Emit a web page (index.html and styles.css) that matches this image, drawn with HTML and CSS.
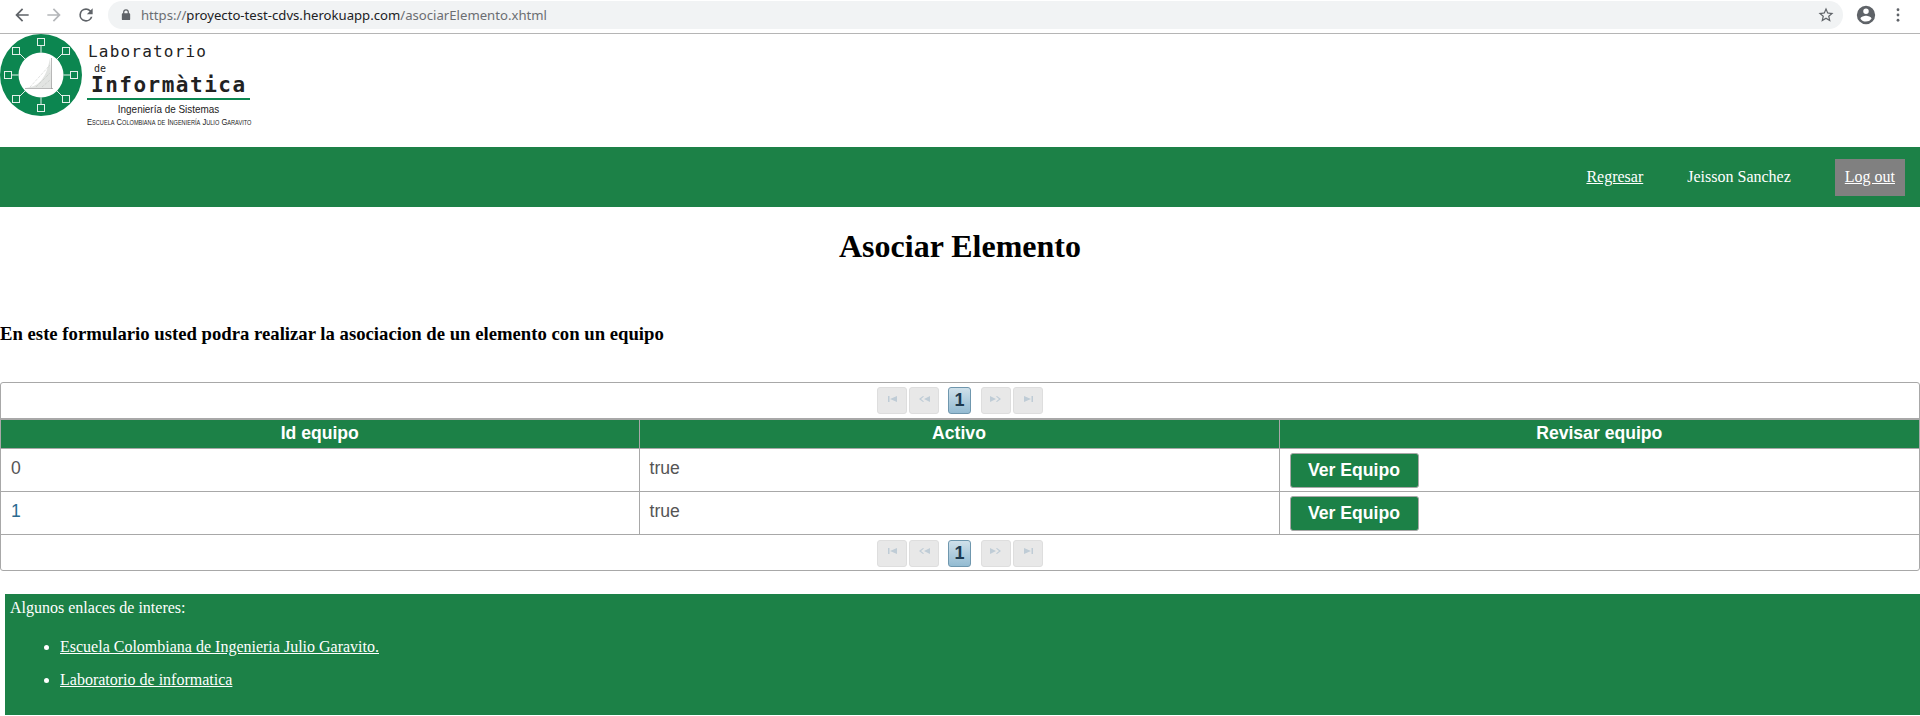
FILE: index.html
```html
<!DOCTYPE html>
<html lang="es">
<head>
<meta charset="utf-8">
<title>Asociar Elemento</title>
<link rel="stylesheet" href="styles.css">
</head>
<body>
<div class="browser-bar">
  <div class="nav-icons">
    <svg class="ico" viewBox="0 0 24 24"><path fill="#5f6368" d="M20 11H7.83l5.59-5.59L12 4l-8 8 8 8 1.41-1.41L7.83 13H20z"/></svg>
    <svg class="ico" viewBox="0 0 24 24"><path fill="#b4b6b9" d="M4 11h12.17l-5.59-5.59L12 4l8 8-8 8-1.41-1.41L16.17 13H4z"/></svg>
    <svg class="ico" viewBox="0 0 24 24"><path fill="#5f6368" d="M17.65 6.35A7.96 7.96 0 0 0 12 4a8 8 0 1 0 7.73 10h-2.08A6 6 0 1 1 12 6c1.66 0 3.14.69 4.22 1.78L13 11h7V4z"/></svg>
  </div>
  <div class="address">
    <svg class="lock" viewBox="0 0 12 14"><path fill="#5f6368" d="M10 5H9.5V3.5a3.5 3.5 0 0 0-7 0V5H2a1 1 0 0 0-1 1v6a1 1 0 0 0 1 1h8a1 1 0 0 0 1-1V6a1 1 0 0 0-1-1zM4 3.5a2 2 0 0 1 4 0V5H4z"/></svg>
    <span class="url"><span class="url-dim">https://</span>proyecto-test-cdvs.herokuapp.com<span class="url-dim">/asociarElemento.xhtml</span></span>
    <svg class="star" viewBox="0 0 24 24"><path fill="#5f6368" d="M22 9.24l-7.19-.62L12 2 9.19 8.63 2 9.24l5.46 4.73L5.82 21 12 17.27 18.18 21l-1.63-7.03L22 9.24zM12 15.4l-3.76 2.27 1-4.28-3.32-2.88 4.38-.38L12 6.1l1.71 4.04 4.38.38-3.32 2.88 1 4.28L12 15.4z"/></svg>
  </div>
  <svg class="account" viewBox="0 0 24 24"><path fill="#5f6368" d="M12 2a10 10 0 1 0 0 20 10 10 0 0 0 0-20zm0 3a3 3 0 1 1 0 6 3 3 0 0 1 0-6zm0 14.2a7.2 7.2 0 0 1-6-3.22c.03-1.99 4-3.08 6-3.08s5.97 1.09 6 3.08a7.2 7.2 0 0 1-6 3.22z"/></svg>
  <svg class="kebab" viewBox="0 0 4 16"><circle cx="2" cy="2" r="1.6" fill="#5f6368"/><circle cx="2" cy="8" r="1.6" fill="#5f6368"/><circle cx="2" cy="14" r="1.6" fill="#5f6368"/></svg>
</div>

<header class="brand">
  <svg class="logo-mark" viewBox="0 0 82 82">
    <circle cx="41" cy="41" r="41" fill="#0c8650"/>
    <circle cx="41" cy="41" r="22.500" fill="#fff"/>
    <g stroke="#e4f0ea" stroke-width="1" fill="none">
      <path d="M41 18.500V12M41 63.500V70M18.500 41H12M63.500 41H70M25 25l-5-5M57 25l5-5M25 57l-5 5M57 57l5 5"/>
      <rect x="37.500" y="4.500" width="7" height="7"/>
      <rect x="37.500" y="70.500" width="7" height="7"/>
      <rect x="4.500" y="37.500" width="7" height="7"/>
      <rect x="70.500" y="37.500" width="7" height="7"/>
      <rect x="12.500" y="13.500" width="7" height="7"/>
      <rect x="62.500" y="13.500" width="7" height="7"/>
      <rect x="12.500" y="61.500" width="7" height="7"/>
      <rect x="62.500" y="61.500" width="7" height="7"/>
    </g>
    <path d="M25 54c12-1 21-7 25-30l2 30z" fill="#e2e4e2"/>
    <path d="M30 53l20-22M36 53l14-14M42 53l8-7" stroke="#b5b8b5" stroke-width=".6" stroke-dasharray="1 1" fill="none"/>
    <path d="M25 54.500h28M51.500 24v31" stroke="#9a9a9a" stroke-width=".7" fill="none"/>
  </svg>
  <div class="logo-text">
    <div class="logo-l1">Laboratorio</div>
    <div class="logo-l2">de</div>
    <div class="logo-l3">Informàtica</div>
    <div class="logo-l4">Ingeniería de Sistemas</div>
    <div class="logo-l5">Escuela Colombiana de Ingeniería Julio Garavito</div>
  </div>
</header>

<nav class="topnav">
  <a class="navlink" href="#">Regresar</a>
  <span class="navlink">Jeisson Sanchez</span>
  <a class="logout" href="#">Log out</a>
</nav>

<main>
  <h1 class="title">Asociar Elemento</h1>
  <h3 class="intro">En este formulario usted podra realizar la asociacion de un elemento con un equipo</h3>

  <section class="datatable">
    <div class="pager pager-top">
      <span class="pbtn"><svg class="i9" viewBox="0 0 9 6"><path d="M0 0h1.500v6H0zM9 0v6L2 3z"/></svg></span>
      <span class="pbtn"><svg class="i12" viewBox="0 0 12 6"><path d="M12 0v6L6 3zM5 0l1 .6L3 3l3 2.400L5 6 1 3z"/></svg></span>
      <span class="pnum">1</span>
      <span class="pbtn"><svg class="i12" viewBox="0 0 12 6"><path d="M0 0l6 3-6 3zM7 0l4 3-4 3-1-.6L9 3 6 .6z"/></svg></span>
      <span class="pbtn"><svg class="i9" viewBox="0 0 9 6"><path d="M0 0l7 3-7 3zM7.500 0H9v6H7.500z"/></svg></span>
    </div>
    <table>
      <thead>
        <tr><th class="col-id">Id equipo</th><th class="col-activo">Activo</th><th>Revisar equipo</th></tr>
      </thead>
      <tbody>
        <tr><td>0</td><td>true</td><td><button class="ver">Ver Equipo</button></td></tr>
        <tr><td class="blue">1</td><td>true</td><td><button class="ver">Ver Equipo</button></td></tr>
      </tbody>
    </table>
    <div class="pager pager-bottom">
      <span class="pbtn"><svg class="i9" viewBox="0 0 9 6"><path d="M0 0h1.500v6H0zM9 0v6L2 3z"/></svg></span>
      <span class="pbtn"><svg class="i12" viewBox="0 0 12 6"><path d="M12 0v6L6 3zM5 0l1 .6L3 3l3 2.400L5 6 1 3z"/></svg></span>
      <span class="pnum">1</span>
      <span class="pbtn"><svg class="i12" viewBox="0 0 12 6"><path d="M0 0l6 3-6 3zM7 0l4 3-4 3-1-.6L9 3 6 .6z"/></svg></span>
      <span class="pbtn"><svg class="i9" viewBox="0 0 9 6"><path d="M0 0l7 3-7 3zM7.500 0H9v6H7.500z"/></svg></span>
    </div>
  </section>
</main>

<footer class="foot">
  <div>Algunos enlaces de interes:</div>
  <ul>
    <li><a href="#">Escuela Colombiana de Ingenieria Julio Garavito.</a></li>
    <li><a href="#">Laboratorio de informatica</a></li>
  </ul>
</footer>
</body>
</html>
```

FILE: styles.css
```css
* { box-sizing: border-box; }
html, body { margin: 0; padding: 0; background: #fff; }
body { height: 716px; overflow: hidden; font-family: "Liberation Serif", serif; font-size: 16px; color: #000; }

.browser-bar { height: 34px; display: flex; align-items: flex-start; border-bottom: 1px solid #b5b5b5; background: #fff; }
.nav-icons { width: 108px; height: 30px; display: flex; align-items: center; gap: 12px; padding-left: 12px; flex: none; }
.ico { width: 20px; height: 20px; flex: none; }
.address { margin-top: 1px; width: 1735px; height: 28px; border-radius: 14px; background: #f1f3f4; display: flex; align-items: center; padding: 0 7px 0 13px; flex: none; }
.lock { width: 10px; height: 12px; flex: none; margin-right: 10px; }
.url { font-family: "Noto Sans", sans-serif; font-size: 13.150px; color: #202124; flex: 1; white-space: nowrap; }
.url-dim { color: #6b6e72; }
.star { width: 18px; height: 18px; flex: none; margin-right: 1px; }
.account { width: 22px; height: 22px; margin: 4px 0 0 12px; flex: none; }
.kebab { width: 4px; height: 14px; margin: 8px 0 0 19px; flex: none; }

.brand { height: 113px; display: flex; align-items: flex-start; }
.logo-mark { width: 82px; height: 82px; flex: none; }
.logo-text { width: 163px; margin-left: 5px; color: #222; white-space: nowrap; }
.logo-l1 { font-family: "DejaVu Sans Mono", monospace; font-size: 16px; line-height: 14px; height: 14px; margin-top: 11px; margin-left: 1px; letter-spacing: 1.200px; }
.logo-l2 { font-family: "DejaVu Sans Mono", monospace; font-size: 10px; line-height: 10px; height: 10px; margin-top: 5px; margin-left: 7px; }
.logo-l3 { font-family: "DejaVu Sans Mono", monospace; font-weight: bold; font-size: 21px; line-height: 23px; height: 26px; border-bottom: 2px solid #0c8650; width: 163px; padding-left: 4px; letter-spacing: 1.500px; }
.logo-l4 { font-family: "Liberation Sans", sans-serif; font-size: 11px; line-height: 12px; margin-top: 3px; text-align: center; transform: scaleX(.9); }
.logo-l5 { font-family: "Liberation Sans", sans-serif; font-size: 9.500px; line-height: 10px; margin-top: 2px; font-variant: small-caps; transform: scaleX(.8); transform-origin: left center; }

.topnav { height: 60px; background: #1c8147; display: flex; justify-content: flex-end; align-items: center; padding-right: 15px; color: #fff; }
.navlink { color: #fff; margin-right: 44px; }
.logout { color: #fff; background: #808080; height: 37px; line-height: 36px; padding: 0 10px; }

.title { margin: 0; padding-top: 21px; height: 95px; font-size: 32px; line-height: 37px; font-weight: bold; text-align: center; }
.intro { margin: 0; height: 80px; padding-top: 21px; font-size: 18.720px; line-height: 21px; font-weight: bold; }

.datatable { border: 1px solid #a8a8a8; border-radius: 3px; height: 189px; font-family: "Liberation Sans", sans-serif; overflow: hidden; }
.pager { height: 36px; display: flex; justify-content: center; align-items: center; gap: 2px; }
.pager-top { border-bottom: 1px solid #a8a8a8; }
.pbtn { width: 30px; height: 27px; background: #e8e8e8; border: 1px solid #dedede; border-radius: 3px; display: flex; align-items: center; justify-content: center; padding-bottom: 4px; }
.pbtn svg { height: 6px; fill: #bfccd6; }
.i9 { width: 9px; }
.i12 { width: 12px; }
.pnum { width: 23px; height: 27px; margin: 0 8px 0 7px; border: 1px solid #6f97ae; border-radius: 3px; background: linear-gradient(#cfe0ea, #93bbd2); color: #1d3a4f; font-weight: bold; font-size: 18px; line-height: 25px; text-align: center; }

table { width: 100%; table-layout: fixed; border-collapse: collapse; }
th { height: 29px; padding: 0 0 2px; background: #1c8147; color: #fff; font-size: 17.600px; font-weight: bold; text-align: center; border: 1px solid #a8a8a8; }
.col-id { width: 638px; }
.col-activo { width: 640px; }
td { height: 43px; padding: 0 10px 3px; font-size: 17.600px; color: #555; border: 1px solid #a8a8a8; }
th:first-child, td:first-child { border-left: 0; }
th:last-child, td:last-child { border-right: 0; }
td.blue { color: #2a6a90; }
.ver { display: block; width: 129px; height: 35px; margin-top: 3px; padding: 0; background: #1c8147; color: #fff; border: 1px solid #a8a8a8; border-radius: 3px; font-family: "Liberation Sans", sans-serif; font-size: 17.600px; font-weight: bold; }

.foot { margin: 23px 0 0 5px; height: 121px; background: #1c8147; color: #fff; padding: 5px; line-height: 18px; }
.foot ul { margin: 21px 0 0; padding-left: 50px; }
.foot li { margin-bottom: 15px; }
.foot a { color: #fff; }
```
